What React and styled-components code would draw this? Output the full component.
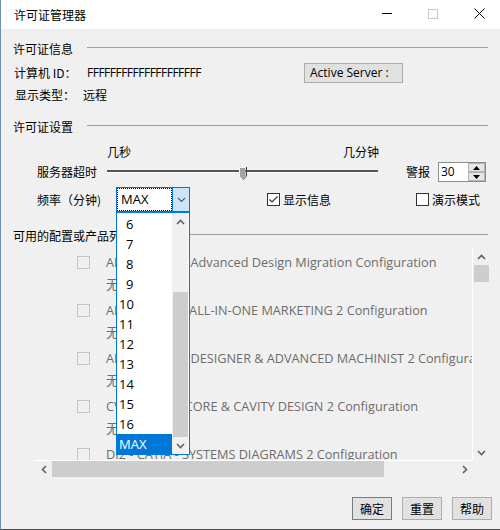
import React from "react";
import styled, { createGlobalStyle } from "styled-components";

const CJK = `"Noto Sans CJK SC", sans-serif`;
const UI = `"Open Sans", "Noto Sans CJK SC", sans-serif`;

const GlobalStyle = createGlobalStyle`
  html, body { margin: 0; padding: 0; background: #f0f0f0; }
  body { font-family: ${CJK}; color: #000; }
  #root { width: 500px; height: 530px; }
`;

const Window = styled.div`
  width: 500px;
  height: 530px;
  box-sizing: border-box;
  border-left: 1px solid #6f8fb5;
  border-bottom: 1px solid #505050;
  background: #f0f0f0;
  display: flex;
  flex-direction: column;
  overflow: hidden;
`;

const TitleBar = styled.div`
  height: 29px;
  flex-shrink: 0;
  background: #fff;
  display: flex;
  align-items: center;
  padding-left: 13px;
`;

const TitleText = styled.div`
  flex: 1;
  font: 12px/16px ${CJK};
`;

const CaptionButton = styled.div`
  width: ${(p) => p.$w}px;
  height: 29px;
  display: flex;
  align-items: center;
  justify-content: center;
  padding-bottom: 2px;
  box-sizing: border-box;
`;

const Body = styled.div`
  flex: 1;
  display: flex;
  flex-direction: column;
  padding: 12px 12px 0 12px;
`;

const SectionHeader = styled.div`
  display: flex;
  align-items: center;
  gap: 14px;
  height: 16px;
  margin-top: ${(p) => p.$mt || 0}px;
  font: 12px/16px ${CJK};
  white-space: nowrap;
`;

const Rule = styled.div`
  flex: 1;
  border-top: 1px solid #a0a0a0;
  margin-bottom: 3px;
`;

const InfoRow = styled.div`
  display: flex;
  align-items: center;
  height: ${(p) => p.$h}px;
  margin-top: ${(p) => p.$mt}px;
  padding-left: ${(p) => p.$pl}px;
  font: 12px/16px ${CJK};
`;

const FieldLabel = styled.span`
  width: ${(p) => p.$w}px;
  flex-shrink: 0;
`;

const FieldValue = styled.span`
  width: ${(p) => p.$w || "auto"}px;
  flex-shrink: 0;
  font-family: ${(p) => (p.$latin ? UI : CJK)};
  letter-spacing: ${(p) => (p.$latin ? "-0.5px" : "0")};
`;

const PushButton = styled.button`
  box-sizing: border-box;
  width: ${(p) => p.$w}px;
  height: ${(p) => p.$h}px;
  padding: 0 0 0 ${(p) => p.$pl || 0}px;
  border: 1px solid ${(p) => (p.$default ? "#7a7a7a" : "#adadad")};
  background: #e1e1e1;
  color: #000;
  font: 12px/16px ${(p) => (p.$latin ? UI : CJK)};
  text-align: ${(p) => (p.$pl ? "left" : "center")};
`;

const SliderCaptions = styled.div`
  display: flex;
  justify-content: space-between;
  width: 272px;
  margin: 9px 0 0 94px;
  height: 16px;
  font: 12px/16px ${CJK};
`;

const ControlRow = styled.div`
  display: flex;
  align-items: center;
  height: ${(p) => p.$h}px;
  margin-top: ${(p) => p.$mt}px;
  padding-left: 24px;
  font: 12px/16px ${CJK};
`;

const RowLabel = styled.span`
  width: ${(p) => p.$w}px;
  flex-shrink: 0;
  white-space: nowrap;
`;

const Slider = styled.div`
  position: relative;
  width: 271px;
  height: 20px;
  flex-shrink: 0;
`;

const Track = styled.div`
  margin-top: 8px;
  height: 2px;
  background: #555;
  border-bottom: 1px solid #fff;
`;

const Thumb = styled.svg`
  position: absolute;
  top: 5px;
`;

const AlarmLabel = styled.span`
  margin-left: 28px;
  width: 32px;
  flex-shrink: 0;
`;

const Spinner = styled.div`
  box-sizing: border-box;
  width: 48px;
  height: 20px;
  border: 1px solid #8c8c8c;
  background: #fff;
  display: flex;
`;

const SpinText = styled.div`
  flex: 1;
  padding-left: 2px;
  font: 12px/18px ${UI};
`;

const SpinButtons = styled.div`
  width: 17px;
  display: flex;
  flex-direction: column;
  justify-content: center;
`;

const SpinButton = styled.div`
  height: 9px;
  box-sizing: border-box;
  border: 1px solid #b4b4b4;
  background: #e6e6e6;
  display: flex;
  align-items: center;
  justify-content: center;
`;

const ComboWrap = styled.div`
  position: relative;
  width: 74px;
  height: 25px;
  flex-shrink: 0;
`;

const Combo = styled.div`
  box-sizing: border-box;
  width: 74px;
  height: 25px;
  border: 1px solid #0078d7;
  background: #fff;
  display: flex;
`;

const ComboEdit = styled.div`
  box-sizing: border-box;
  width: 55px;
  border: 1px dotted #000;
  padding-left: 3px;
  font: 13px/21px ${UI};
`;

const ComboButton = styled.div`
  flex: 1;
  border-left: 1px solid #0078d7;
  background: #cce4f7;
  display: flex;
  align-items: center;
  justify-content: center;
`;

const DropList = styled.div`
  position: absolute;
  left: 0;
  top: 25px;
  width: 74px;
  height: 243px;
  box-sizing: border-box;
  border: 1px solid #0078d7;
  background: #fff;
  display: flex;
  z-index: 10;
`;

const DropItems = styled.div`
  width: 55px;
  padding-top: 1px;
  display: flex;
  flex-direction: column;
`;

const DropItem = styled.div`
  height: 20px;
  padding-left: ${(p) => (p.$short ? 9 : 2)}px;
  font: 13px/20px ${UI};
  background: ${(p) => (p.$sel ? "#0078d7" : "transparent")};
  color: ${(p) => (p.$sel ? "#fff" : "#000")};
`;

const ScrollV = styled.div`
  width: ${(p) => p.$w || 16}px;
  display: flex;
  flex-direction: column;
  background: #f0f0f0;
  flex-shrink: 0;
`;

const ScrollH = styled.div`
  display: flex;
  background: #f0f0f0;
`;

const ArrowBox = styled.div`
  flex: 0 0 17px;
  display: flex;
  align-items: center;
  justify-content: center;
`;

const ScrollTrack = styled.div`
  flex: 1;
  display: flex;
  flex-direction: ${(p) => (p.$horizontal ? "row" : "column")};
  justify-content: ${(p) => (p.$end ? "flex-end" : "flex-start")};
`;

const ScrollThumb = styled.div`
  background: #cdcdcd;
  flex: 0 0 ${(p) => p.$size}px;
  margin: ${(p) => (p.$horizontal ? "0" : "0 0 0 1px")};
`;

const CheckItem = styled.label`
  display: flex;
  align-items: center;
  gap: 3px;
  margin-left: ${(p) => p.$ml}px;
  flex-shrink: 0;
`;

const CheckBox = styled.span`
  box-sizing: border-box;
  width: 13px;
  height: 13px;
  border: 1px solid #333;
  background: #fff;
  display: flex;
  align-items: center;
  justify-content: center;
`;

const ListFrame = styled.div`
  margin: 4px 0 0 22px;
  width: 454px;
  display: grid;
  grid-template-columns: 438px 16px;
  grid-template-rows: 213px 16px;
`;

const ListView = styled.div`
  box-sizing: border-box;
  border-right: 1px solid #fff;
  border-bottom: 1px solid #fff;
  overflow: hidden;
  padding: 3px 0 0 42px;
`;

const Product = styled.div`
  display: grid;
  grid-template-columns: 13px auto;
  column-gap: 16px;
  margin-bottom: 4px;
  color: #6d6d6d;
  white-space: nowrap;
`;

const ProductBox = styled.span`
  box-sizing: border-box;
  width: 13px;
  height: 13px;
  margin-top: 5px;
  border: 1px solid #c6c6c6;
`;

const ProductLine = styled.div`
  grid-column: 2;
  font: ${(p) => (p.$cjk ? "13px" : "12.7px")}/22px ${(p) => (p.$cjk ? CJK : UI)};
`;

const Corner = styled.div`
  background: #f0f0f0;
`;

const Footer = styled.div`
  display: flex;
  justify-content: flex-end;
  gap: 10px;
  margin: 20px -4px 0 0;
`;

const ChevronUp = () => (
  <svg width="9" height="6" viewBox="0 0 9 6">
    <path d="M1 5 L4.5 1.5 L8 5" fill="none" stroke="#606060" strokeWidth="1.6" />
  </svg>
);
const ChevronDown = ({ color = "#606060", w = 1.6 }) => (
  <svg width="9" height="6" viewBox="0 0 9 6">
    <path d="M1 1 L4.5 4.5 L8 1" fill="none" stroke={color} strokeWidth={w} />
  </svg>
);
const ChevronLeft = () => (
  <svg width="6" height="9" viewBox="0 0 6 9">
    <path d="M5 1 L1.5 4.5 L5 8" fill="none" stroke="#606060" strokeWidth="1.6" />
  </svg>
);
const ChevronRight = () => (
  <svg width="6" height="9" viewBox="0 0 6 9">
    <path d="M1 1 L4.5 4.5 L1 8" fill="none" stroke="#606060" strokeWidth="1.6" />
  </svg>
);

const products = [
  "ADM - CATIA - Advanced Design Migration Configuration",
  "AMK - CATIA - ALL-IN-ONE MARKETING 2 Configuration",
  "AMD - CATIA - DESIGNER & ADVANCED MACHINIST 2 Configuration",
  "CV2 - CATIA - CORE & CAVITY DESIGN 2 Configuration",
  "DI2 - CATIA - SYSTEMS DIAGRAMS 2 Configuration",
];

const options = ["6", "7", "8", "9", "10", "11", "12", "13", "14", "15", "16", "MAX"];

export default function App() {
  const sliderValue = 0.5;
  return (
    <>
      <GlobalStyle />
      <Window>
        <TitleBar>
          <TitleText>许可证管理器</TitleText>
          <CaptionButton $w={46}>
            <svg width="10" height="1"><rect width="10" height="1" fill="#000" /></svg>
          </CaptionButton>
          <CaptionButton $w={46}>
            <svg width="10" height="10"><rect x="0.5" y="0.5" width="9" height="9" fill="none" stroke="#c8c8c8" /></svg>
          </CaptionButton>
          <CaptionButton $w={44}>
            <svg width="11" height="11" viewBox="0 0 11 11" style={{ marginLeft: 3 }}>
              <path d="M0.5 0.5 L10.5 10.5 M10.5 0.5 L0.5 10.5" stroke="#000" strokeWidth="1" />
            </svg>
          </CaptionButton>
        </TitleBar>
        <Body>
          <SectionHeader>
            <span>许可证信息</span>
            <Rule />
          </SectionHeader>
          <InfoRow $h={20} $mt={6} $pl={1}>
            <FieldLabel $w={73}>计算机 ID：</FieldLabel>
            <FieldValue $w={217} $latin>FFFFFFFFFFFFFFFFFFFF</FieldValue>
            <PushButton $w={99} $h={20} $pl={5} $latin>Active Server :</PushButton>
          </InfoRow>
          <InfoRow $h={16} $mt={4} $pl={2}>
            <FieldLabel $w={68}>显示类型：</FieldLabel>
            <FieldValue>远程</FieldValue>
          </InfoRow>

          <SectionHeader $mt={16}>
            <span>许可证设置</span>
            <Rule />
          </SectionHeader>
          <SliderCaptions>
            <span>几秒</span>
            <span>几分钟</span>
          </SliderCaptions>
          <ControlRow $h={20} $mt={2}>
            <RowLabel $w={70}>服务器超时</RowLabel>
            <Slider>
              <Track />
              <Thumb width="8" height="13" viewBox="0 0 8 13" style={{ left: Math.round((271 - 8) * sliderValue) }}>
                <path d="M0.5 0.5 H6.5 V9 L3.5 12 L0.5 9 Z" fill="#a3a3a3" />
                <path d="M0.5 9 V0.5 H6.5" fill="none" stroke="#fff" strokeWidth="1" />
                <path d="M7.5 0 V9.2 L3.6 13" fill="none" stroke="#404040" strokeWidth="1" />
              </Thumb>
            </Slider>
            <AlarmLabel>警报</AlarmLabel>
            <Spinner>
              <SpinText>30</SpinText>
              <SpinButtons>
                <SpinButton>
                  <svg width="7" height="4"><path d="M0 4 L3.5 0 L7 4 Z" fill="#000" /></svg>
                </SpinButton>
                <SpinButton>
                  <svg width="7" height="4"><path d="M0 0 L3.5 4 L7 0 Z" fill="#000" /></svg>
                </SpinButton>
              </SpinButtons>
            </Spinner>
          </ControlRow>
          <ControlRow $h={25} $mt={5}>
            <RowLabel $w={79}>频率（分钟)</RowLabel>
            <ComboWrap>
              <Combo>
                <ComboEdit>MAX</ComboEdit>
                <ComboButton>
                  <ChevronDown color="#5a5a5a" w={1.1} />
                </ComboButton>
              </Combo>
              <DropList>
                <DropItems>
                  {options.map((o) => (
                    <DropItem key={o} $short={o.length === 1} $sel={o === "MAX"}>
                      {o}
                    </DropItem>
                  ))}
                </DropItems>
                <ScrollV>
                  <ArrowBox><ChevronUp /></ArrowBox>
                  <ScrollTrack $end>
                    <ScrollThumb $size={145} />
                  </ScrollTrack>
                  <ArrowBox><ChevronDown /></ArrowBox>
                </ScrollV>
              </DropList>
            </ComboWrap>
            <CheckItem $ml={77}>
              <CheckBox>
                <svg width="11" height="11" viewBox="0 0 11 11">
                  <path d="M1.5 5.5 L4 8 L9.5 2.5" fill="none" stroke="#333" strokeWidth="1.2" />
                </svg>
              </CheckBox>
              <span>显示信息</span>
            </CheckItem>
            <CheckItem $ml={85}>
              <CheckBox />
              <span>演示模式</span>
            </CheckItem>
          </ControlRow>

          <SectionHeader $mt={16}>
            <span>可用的配置或产品列表</span>
            <Rule />
          </SectionHeader>
          <ListFrame>
            <ListView>
              {products.map((p) => (
                <Product key={p}>
                  <ProductBox />
                  <ProductLine>{p}</ProductLine>
                  <ProductLine $cjk>无</ProductLine>
                </Product>
              ))}
            </ListView>
            <ScrollV>
              <ArrowBox><ChevronUp /></ArrowBox>
              <ScrollThumb $size={17} />
              <ScrollTrack />
              <ArrowBox><ChevronDown /></ArrowBox>
            </ScrollV>
            <ScrollH>
              <ArrowBox><ChevronLeft /></ArrowBox>
              <ScrollThumb $size={332} $horizontal />
              <ScrollTrack $horizontal />
              <ArrowBox><ChevronRight /></ArrowBox>
            </ScrollH>
            <Corner />
          </ListFrame>

          <Footer>
            <PushButton $w={40} $h={23} $default>确定</PushButton>
            <PushButton $w={40} $h={23}>重置</PushButton>
            <PushButton $w={40} $h={23}>帮助</PushButton>
          </Footer>
        </Body>
      </Window>
    </>
  );
}
